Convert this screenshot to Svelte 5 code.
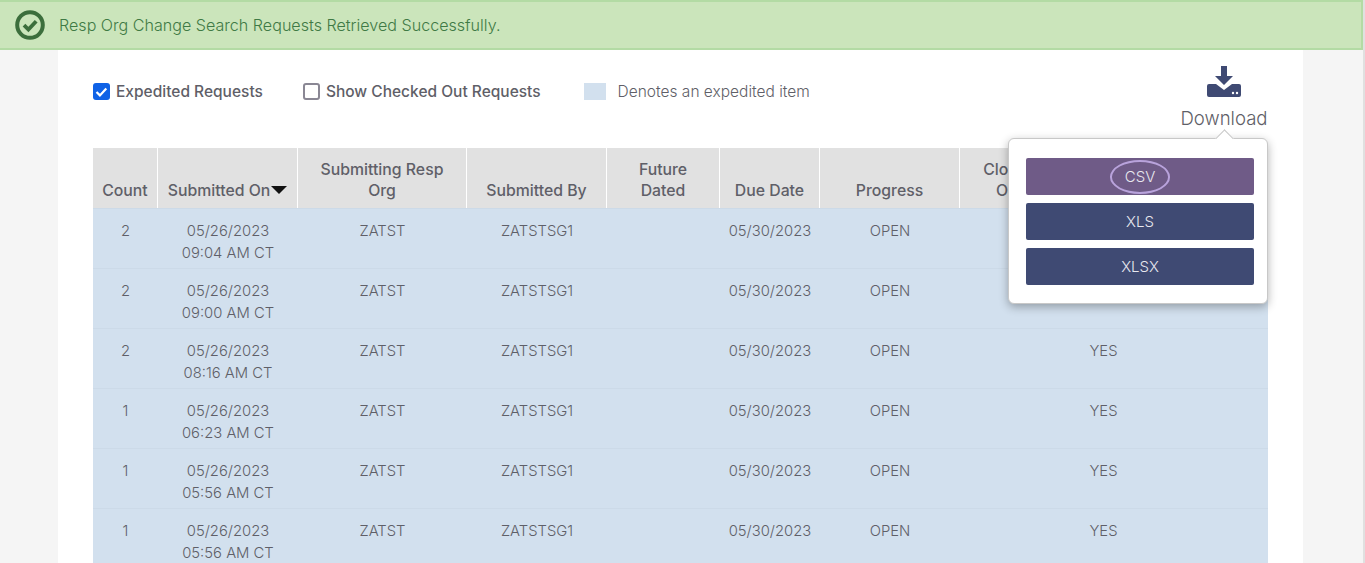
<script lang="ts">
  const columns = [
    { label: 'Count', width: 65 },
    { label: 'Submitted On', width: 140, sorted: true },
    { label: 'Submitting Resp Org', width: 169 },
    { label: 'Submitted By', width: 140 },
    { label: 'Future Dated', width: 113 },
    { label: 'Due Date', width: 100 },
    { label: 'Progress', width: 140 },
    { label: 'Closed Out', width: 100 },
    { label: '', width: 87 },
    { label: '', width: 121 }
  ];

  const rows = [
    { count: 2, date: '05/26/2023', time: '09:04 AM CT', closed: '' },
    { count: 2, date: '05/26/2023', time: '09:00 AM CT', closed: '' },
    { count: 2, date: '05/26/2023', time: '08:16 AM CT', closed: 'YES' },
    { count: 1, date: '05/26/2023', time: '06:23 AM CT', closed: 'YES' },
    { count: 1, date: '05/26/2023', time: '05:56 AM CT', closed: 'YES' },
    { count: 1, date: '05/26/2023', time: '05:56 AM CT', closed: 'YES' }
  ];
</script>

<div class="page">
  <!-- Success banner -->
  <div class="banner">
    <svg class="banner-icon" width="32" height="32" viewBox="0 0 32 32">
      <circle cx="16" cy="16" r="12.8" fill="none" stroke="#3c6e3c" stroke-width="4" />
      <path d="M10 16.2l4.4 4.4 7.8-8.4" fill="none" stroke="#3c6e3c" stroke-width="3.8" />
    </svg>
    <span>Resp Org Change Search Requests Retrieved Successfully.</span>
  </div>

  <main class="panel">
    <div class="toolbar">
      <label class="check"><span class="box checked">
        <svg width="17" height="17" viewBox="0 0 17 17"><path d="M3.5 9l3.4 3.4 6.4-7" fill="none" stroke="#fff" stroke-width="2.2" /></svg>
      </span>Expedited Requests</label>
      <label class="check"><span class="box"></span>Show Checked Out Requests</label>
      <div class="legend"><span class="swatch"></span>Denotes an expedited item</div>
      <div class="download">
        <svg width="36" height="33" viewBox="0 0 36 33">
          <path fill="#3f4a73" d="M15 1h6v10h6l-9 9-9-9h6z" />
          <path fill="#3f4a73" d="M1 21q0-2 2-2h7l8 6 8-6h7q2 0 2 2v9q0 2-2 2H3q-2 0-2-2z" />
          <circle cx="27" cy="28" r="1.2" fill="#fff" />
          <circle cx="31" cy="28" r="1.2" fill="#fff" />
        </svg>
        <span>Download</span>
        <div class="menu">
          <span class="arrow"></span>
          <button class="active"><span class="focus">CSV</span></button>
          <button>XLS</button>
          <button>XLSX</button>
        </div>
      </div>
    </div>

    <div class="table">
      <div class="head">
        {#each columns as col}
          <div class="th" style="width:{col.width}px">
            <span>{col.label}{#if col.sorted}<i class="sort"></i>{/if}</span>
          </div>
        {/each}
      </div>
      {#each rows as row}
        <div class="tr">
          <div class="td" style="width:{columns[0].width}px">{row.count}</div>
          <div class="td" style="width:{columns[1].width}px">{row.date}<br />{row.time}</div>
          <div class="td" style="width:{columns[2].width}px">ZATST</div>
          <div class="td" style="width:{columns[3].width}px">ZATSTSG1</div>
          <div class="td" style="width:{columns[4].width}px"></div>
          <div class="td" style="width:{columns[5].width}px">05/30/2023</div>
          <div class="td" style="width:{columns[6].width}px">OPEN</div>
          <div class="td" style="width:{columns[7].width}px"></div>
          <div class="td" style="width:{columns[8].width}px">{row.closed}</div>
        </div>
      {/each}
    </div>
  </main>
</div>

<style>
  :global(body) {
    background: #f5f5f5;
    overflow: hidden;
  }

  .page {
    height: 563px;
    overflow: hidden;
    font-family: Inter, sans-serif;
    color: #5f5f68;
    border-right: 2px solid #e0e0e0;
  }

  .banner {
    display: flex;
    align-items: center;
    gap: 13px;
    height: 46px;
    padding-left: 14px;
    background: #cbe5bb;
    border: 2px solid #b3dba4;
    border-left: 0;
    color: #3f7a45;
    font-size: 16.1px;
    font-weight: 300;
  }

  .panel {
    margin: 0 60px 0 58px;
    padding: 0 35px;
    background: #fff;
    height: 513px;
  }

  .toolbar {
    position: relative;
    display: flex;
    align-items: center;
    height: 98px;
    font-size: 15.5px;
    padding-bottom: 16px;
    box-sizing: border-box;
  }

  .check {
    display: flex;
    align-items: center;
    gap: 6px;
    margin-right: 40px;
    font-weight: 500;
  }

  .box {
    width: 13px;
    height: 13px;
    border: 2px solid #8a8794;
    border-radius: 3px;
    display: flex;
  }

  .box.checked {
    width: 17px;
    height: 17px;
    border: 0;
    background: #0f62e6;
  }

  .legend {
    display: flex;
    align-items: center;
    gap: 12px;
    margin-left: 3px;
    font-weight: 300;
  }

  .swatch {
    width: 22px;
    height: 17px;
    background: #d2e0ee;
  }

  .download {
    position: absolute;
    right: 0;
    top: 15px;
    width: 88px;
    display: flex;
    flex-direction: column;
    align-items: center;
    font-size: 18.6px;
    font-weight: 300;
    gap: 9px;
  }

  .menu {
    position: absolute;
    top: 73px;
    right: 0;
    z-index: 2;
    width: 260px;
    height: 166px;
    padding: 19px 13px 0 17px;
    box-sizing: border-box;
    background: #fff;
    border: 1px solid #c8c8c8;
    border-radius: 6px;
    box-shadow: 0 3px 10px rgba(0, 0, 0, 0.3);
    display: flex;
    flex-direction: column;
    gap: 8px;
  }

  .arrow {
    position: absolute;
    top: -7px;
    right: 36px;
    width: 12px;
    height: 12px;
    background: #fff;
    border-top: 1px solid #c8c8c8;
    border-left: 1px solid #c8c8c8;
    transform: rotate(45deg);
  }

  .menu button {
    height: 37px;
    border: 0;
    border-radius: 2px;
    background: #3f4a73;
    color: #e8e8ef;
    font: inherit;
    font-size: 15px;
  }

  .menu button.active {
    background: #6f5b87;
  }

  .focus {
    display: inline-block;
    padding: 6px 13px;
    line-height: 18px;
    border: 2.5px solid #b9a3dc;
    border-radius: 50%;
  }

  .table {
    font-size: 14.8px;
    font-weight: 300;
  }

  .head {
    display: flex;
    height: 60px;
    background: #e1e1e1;
    font-size: 15.8px;
    font-weight: 500;
  }

  .th {
    box-sizing: border-box;
    border-right: 1px solid #fff;
    padding: 0 6px 7px;
    display: flex;
    align-items: flex-end;
    justify-content: center;
    text-align: center;
    line-height: 21px;
  }

  .th:nth-child(1),
  .th:nth-child(2) {
    padding: 0 0 7px;
    white-space: nowrap;
  }

  .th:nth-child(3) {
    padding: 0 10px 7px;
  }

  .th:nth-child(5),
  .th:nth-child(8) {
    padding: 0 20px 7px;
  }

  .th:last-child {
    border-right: 0;
  }

  .sort {
    display: inline-block;
    margin-left: 1px;
    border: 8px solid transparent;
    border-top: 8px solid #111;
    border-bottom: 0;
    vertical-align: 2px;
  }

  .tr {
    display: flex;
    height: 60.1px;
    background: #d2e0ee;
    border-top: 1px solid #ccdae8;
    box-sizing: border-box;
  }

  .td {
    box-sizing: border-box;
    padding-top: 12px;
    text-align: center;
    line-height: 21.6px;
  }
</style>
